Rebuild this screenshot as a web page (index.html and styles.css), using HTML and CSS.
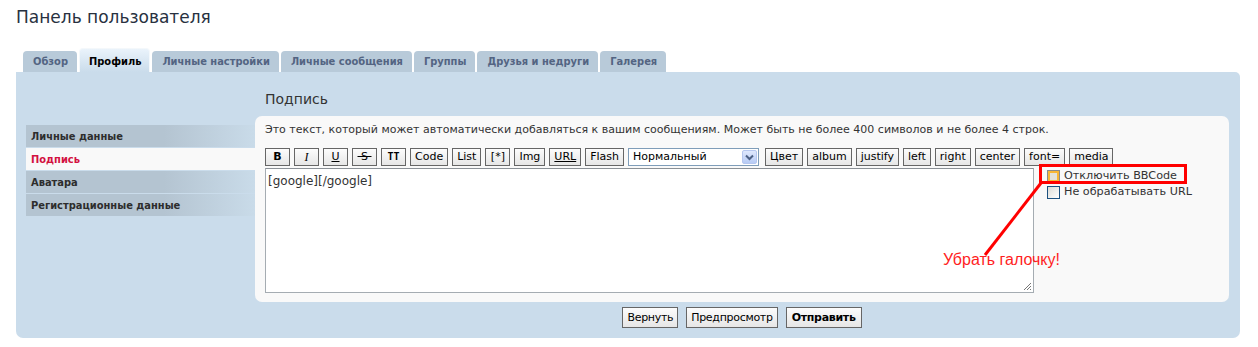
FILE: index.html
```html
<!DOCTYPE html>
<html>
	<head>
		<meta charset="utf-8">
		<link rel="stylesheet" href="styles.css">
		<title>Панель пользователя</title>
	</head>
	<body>
		<div class="page">
			<h1 class="title">Панель пользователя</h1>
			<ul class="tabs">
				<li class="tab">Обзор</li>
				<li class="tab active">Профиль</li>
				<li class="tab">Личные настройки</li>
				<li class="tab">Личные сообщения</li>
				<li class="tab">Группы</li>
				<li class="tab">Друзья и недруги</li>
				<li class="tab">Галерея</li>
			</ul>
			<div class="panel">
				<ul class="menu">
					<li class="menu-item">Личные данные</li>
					<li class="menu-item current">Подпись</li>
					<li class="menu-item">Аватара</li>
					<li class="menu-item">Регистрационные данные</li>
				</ul>
				<div class="main">
					<h2 class="heading">Подпись</h2>
					<div class="box">
						<p class="desc">Это текст, который может автоматически добавляться к вашим сообщениям. Может быть не более 400 символов и не более 4 строк.</p>
						<div class="toolbar">
							<span class="btn b">B</span>
							<span class="btn i">I</span>
							<span class="btn u">U</span>
							<span class="btn s">&nbsp;S&nbsp;</span>
							<span class="btn tt">TT</span>
							<span class="btn">Code</span>
							<span class="btn">List</span>
							<span class="btn">[*]</span>
							<span class="btn">Img</span>
							<span class="btn u">URL</span>
							<span class="btn">Flash</span>
							<div class="select">
								<span class="select-text">Нормальный</span>
								<span class="select-arrow">
									<svg width="9" height="7" viewBox="0 0 9 7"><path d="M1 1.5 L4.5 5 L8 1.5" fill="none" stroke="#4d6185" stroke-width="2"/></svg>
								</span>
							</div>
							<span class="btn">Цвет</span>
							<span class="btn">album</span>
							<span class="btn">justify</span>
							<span class="btn">left</span>
							<span class="btn">right</span>
							<span class="btn">center</span>
							<span class="btn">font=</span>
							<span class="btn">media</span>
						</div>
						<div class="editor">
							<div class="textarea">[google][/google]
								<svg class="grip" width="10" height="10" viewBox="0 0 10 10"><path d="M9 2 L2 9 M9 5 L5 9 M9 8 L8 9" stroke="#777" stroke-width="1"/></svg>
							</div>
							<div class="options">
								<label class="option"><span class="check hover"></span>Отключить BBCode</label>
								<label class="option"><span class="check"></span>Не обрабатывать URL</label>
							</div>
						</div>
					</div>
					<div class="buttons">
						<span class="button">Вернуть</span>
						<span class="button">Предпросмотр</span>
						<span class="button bold">Отправить</span>
					</div>
				</div>
			</div>
		</div>
		<!-- пометка поверх скриншота -->
		<svg class="mark" width="1258" height="347">
			<rect x="1040.5" y="165.5" width="145" height="17" fill="none" stroke="#ff0000" stroke-width="3"/>
			<line x1="1041" y1="183" x2="985" y2="255" stroke="#ff0000" stroke-width="3"/>
		</svg>
		<div class="note">Убрать галочку!</div>
	</body>
</html>
```

FILE: styles.css
```css
*{
	margin: 0;
	padding: 0;
	box-sizing: border-box;
}
li{
	list-style: none;
}
body{
	position: relative;
	width: 1258px;
	height: 347px;
	background: #fff;
	font-family: "DejaVu Sans", Verdana, sans-serif;
	color: #333;
	overflow: hidden;
}
.page{
	padding: 0 18px 0 16px;
}
.title{
	font-size: 17px;
	font-weight: normal;
	color: #28313f;
	padding-top: 7px;
	height: 48px;
}
/* вкладки */
.tabs{
	display: flex;
	align-items: flex-end;
	gap: 2px;
	padding-left: 7px;
	height: 24px;
}
.tab{
	height: 21px;
	line-height: 21px;
	padding: 0 9px 0 10px;
	font-family: "DejaVu Sans Condensed", "DejaVu Sans", sans-serif;
	font-stretch: condensed;
	font-weight: bold;
	font-size: 11px;
	color: #536482;
	background: #b8cad9;
	border-radius: 4px 4px 0 0;
}
.tab.active{
	height: 24px;
	line-height: 25px;
	padding: 0 8px 0 9px;
	color: #000;
	background: linear-gradient(#eaf3fb, #cadceb);
	border: 1px solid #f4f8fb;
	border-bottom: none;
}
.panel{
	display: flex;
	height: 266px;
	background: #cadceb;
	border-radius: 0 5px 7px 7px;
	padding: 0 11px 0 10px;
}
/* левое меню */
.menu{
	width: 229px;
	padding-top: 53px;
}
.menu-item{
	height: 22px;
	line-height: 24px;
	margin-bottom: 1px;
	padding-left: 5px;
	font-family: "DejaVu Sans Condensed", "DejaVu Sans", sans-serif;
	font-stretch: condensed;
	font-weight: bold;
	font-size: 11px;
	color: #2d2d2d;
	background: linear-gradient(to right, #b4c4d1 60%, #c9dbe9);
}
.menu-item.current{
	color: #d31141;
	background: #f9f9f9;
}
.main{
	flex: 1;
	display: flex;
	flex-direction: column;
}
.heading{
	height: 44px;
	padding: 19px 0 0 10px;
	font-size: 14px;
	font-weight: normal;
	color: #333;
}
.box{
	height: 186px;
	background: #f9f9f9;
	border-radius: 7px;
	padding: 7px 0 0 10px;
}
.desc{
	font-size: 11px;
	line-height: 14px;
	color: #333;
	height: 25px;
}
.toolbar{
	display: flex;
	gap: 4px;
	height: 20px;
}
.btn{
	height: 18px;
	line-height: 16px;
	padding: 0 4px;
	min-width: 25px;
	text-align: center;
	font-size: 11px;
	color: #000;
	border: 1px solid #666;
	background: linear-gradient(#fcfcfc, #e6e6e6);
}
.btn.b{
	font-weight: bold;
}
.btn.i{
	font-style: italic;
	font-family: "Liberation Serif", serif;
	font-size: 12px;
}
.btn.u{
	text-decoration: underline;
}
.btn.s{
	text-decoration: line-through;
	padding: 0;
}
.btn.tt{
	font-family: "DejaVu Sans Mono", monospace;
	font-weight: bold;
	font-size: 10px;
	padding: 0 3px;
}
.select{
	display: flex;
	width: 131px;
	height: 18px;
	border: 1px solid #7f9db9;
	background: #fff;
	padding: 1px;
	margin-right: 2px;
}
.select-text{
	flex: 1;
	font-size: 11px;
	line-height: 14px;
	padding-left: 3px;
	color: #000;
}
.select-arrow{
	width: 15px;
	display: flex;
	align-items: center;
	justify-content: center;
	background: linear-gradient(#dfe8fd, #b7cbf5);
	border: 1px solid #b6c7ef;
	border-radius: 2px;
}
.editor{
	display: flex;
	gap: 13px;
}
.textarea{
	position: relative;
	width: 769px;
	height: 125px;
	border: 1px solid #a5acb2;
	border-top-color: #8a9096;
	background: #fff;
	font-size: 12px;
	color: #333;
	padding: 4px 2px;
	line-height: 16px;
}
.grip{
	position: absolute;
	right: 1px;
	bottom: 1px;
}
.option{
	display: flex;
	align-items: center;
	gap: 4px;
	height: 16px;
	font-size: 11.2px;
	line-height: 14px;
	color: #333;
}
.check{
	width: 13px;
	height: 13px;
	border: 1px solid #1c5180;
	background: linear-gradient(135deg, #dcdcd7, #fff);
}
.check.hover{
	border-color: #8a8a8a;
	box-shadow: inset 0 0 0 2px #f8b636;
	background: #e4e2da;
}
.buttons{
	display: flex;
	justify-content: center;
	gap: 8px;
	padding-top: 5px;
}
.button{
	height: 21px;
	line-height: 19px;
	padding: 0 4px;
	font-size: 11px;
	letter-spacing: -0.3px;
	color: #000;
	border: 1px solid #666;
	background: linear-gradient(#fcfcfc, #e6e6e6);
}
.button.bold{
	font-weight: bold;
	padding: 0 5px;
}
/* пометка */
.mark{
	position: absolute;
	left: 0;
	top: 0;
	pointer-events: none;
}
.note{
	position: absolute;
	left: 943px;
	top: 251px;
	font-family: "Liberation Sans", Arial, sans-serif;
	font-size: 16px;
	color: #ff1e1e;
}
```
